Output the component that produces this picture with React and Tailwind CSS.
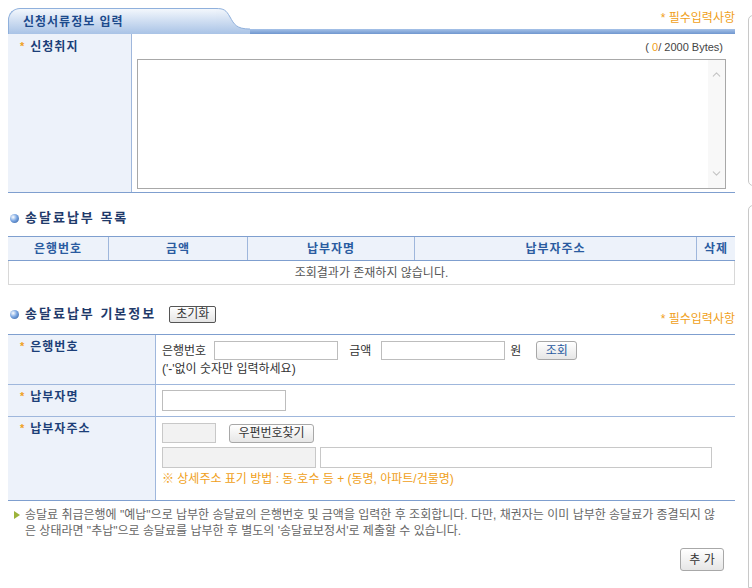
import React from 'react';
import { ChevronUp, ChevronDown } from 'lucide-react';

const Star = () => <span className="text-[#f0a020] text-[11px] mr-[5px]">*</span>;

const Bullet = () => (
  <span className="inline-block ml-[2px] w-[9px] h-[9px] rounded-full bg-[radial-gradient(circle_at_35%_35%,#ffffff,#7aa6e2_45%,#2b5797)] mr-[6px]"></span>
);

const GrayButton = ({ children, className = '' }) => (
  <button className={`border border-[#a8a8a8] rounded-[3px] bg-gradient-to-b from-white to-[#e6e6e6] text-[12px] leading-none ${className}`}>
    {children}
  </button>
);

const Label = ({ children }) => (
  <div className="w-[148px] shrink-0 bg-[#edf2fa] border-r border-[#9fb7dc] pl-[12px] pt-[3px] font-bold text-[12px] tracking-[1px] text-[#1c3f78] flex items-start">
    <Star />
    {children}
  </div>
);

const App = () => {
  const columns = [
    { label: '은행번호', w: 'w-[101px]' },
    { label: '금액', w: 'w-[139px]' },
    { label: '납부자명', w: 'w-[167px]' },
    { label: '납부자주소', w: 'w-[282px]' },
    { label: '삭제', w: 'flex-1' }
  ];

  return (
    <div className="w-[752px] h-[588px] overflow-hidden bg-white flex text-[12px] text-[#333] font-['Liberation_Sans','Noto_Sans_CJK_KR',sans-serif]">
      {/* Main column */}
      <div className="ml-2 w-[727px] shrink-0 flex flex-col">
        {/* Tab header */}
        <div className="relative h-[34px] flex items-end">
          <div className="w-[208px] h-[26px] rounded-tl-[12px] border-t border-l border-[#8fb0dc] bg-gradient-to-b from-[#f3f7fc] to-[#a9c3e6] pl-[14px] pt-[4px] font-bold text-[12px] tracking-[1px] text-[#1c4a8c]">
            신청서류정보 입력
          </div>
          <svg width="34" height="26" viewBox="0 0 34 26" className="shrink-0">
            <defs>
              <linearGradient id="tabg" x1="0" y1="0" x2="0" y2="1">
                <stop offset="0" stopColor="#f3f7fc" />
                <stop offset="1" stopColor="#a9c3e6" />
              </linearGradient>
            </defs>
            <path d="M0 0.5 C8 0.5 10 2 14 9 C18 16 20 21 34 21 L34 26 L0 26 Z" fill="url(#tabg)" />
            <path d="M0 0.5 C8 0.5 10 2 14 9 C18 16 20 21 34 21" fill="none" stroke="#8fb0dc" />
          </svg>
          <div className="flex-1 h-[5px] bg-gradient-to-b from-[#a6c2e8] to-[#7097cf]"></div>
          <div className="absolute right-0 top-[9px] text-[12px] text-[#f0a020]">* 필수입력사항</div>
        </div>

        {/* Form 1 */}
        <div className="h-[159px] flex border-b border-[#7f9fcf]">
          <div className="w-[124px] shrink-0 bg-[#edf2fa] border-r border-[#9fb7dc] pl-[12px] pt-[4px] font-bold text-[12px] tracking-[1px] text-[#1c3f78] flex items-start">
            <Star />
            신청취지
          </div>
          <div className="flex-1 flex flex-col pl-[5px] pr-[9px]">
            <div className="text-right text-[11px] pt-[5px] pr-[3px] h-[25px] text-[#444]">
              ( <span className="text-[#f0a020]">0</span>/ 2000 Bytes)
            </div>
            <div className="h-[130px] border border-[#a8a8a8] flex justify-end">
              <div className="w-[17px] bg-[#f8f8f8] flex flex-col justify-between items-center py-[8px]">
                <ChevronUp size={13} className="text-[#c4c4c4]" />
                <ChevronDown size={13} className="text-[#c4c4c4]" />
              </div>
            </div>
          </div>
        </div>

        {/* List heading */}
        <div className="mt-[17px] h-[16px] flex items-center font-bold text-[13px] tracking-[2px] text-[#1f3a6a]">
          <Bullet />
          송달료납부 목록
        </div>

        {/* List table */}
        <div className="mt-[10px]">
          <div className="h-[25px] flex border-t border-b border-[#7f9fcf] bg-[#edf2fa]">
            {columns.map((c, i) => (
              <div
                key={c.label}
                className={`${c.w} flex items-center justify-center font-bold text-[12px] tracking-[1px] text-[#2a5ba0] ${i < columns.length - 1 ? 'border-r border-[#9fb7dc]' : ''}`}
              >
                {c.label}
              </div>
            ))}
          </div>
          <div className="h-[24px] flex items-center justify-center border-l border-r border-b border-[#d8d8d8] text-[#555]">
            조회결과가 존재하지 않습니다.
          </div>
        </div>

        {/* Basic info heading */}
        <div className="mt-[20px] h-[18px] flex items-end justify-between">
          <div className="flex items-center h-[18px] font-bold text-[13px] tracking-[2px] text-[#1f3a6a]">
            <Bullet />
            송달료납부 기본정보
            <button className="ml-[13px] h-[17px] px-[6px] border border-[#555] rounded-[2px] bg-gradient-to-b from-white to-[#e4e4e4] font-normal text-[12px] tracking-normal text-[#333] leading-none">
              초기화
            </button>
          </div>
          <div className="text-[12px] text-[#f0a020] translate-y-[5px]">* 필수입력사항</div>
        </div>

        {/* Form 2 */}
        <div className="mt-[11px] border-t border-[#7f9fcf]">
          <div className="h-[50px] flex border-b border-[#9fb7dc]">
            <Label>은행번호</Label>
            <div className="flex-1 pl-[6px] pt-[6px]">
              <div className="flex items-center h-[19px]">
                <span>은행번호</span>
                <input className="ml-[8px] w-[124px] h-[19px] border border-[#bdbdbd] bg-white" />
                <span className="ml-[11px]">금액</span>
                <input className="ml-[10px] w-[124px] h-[19px] border border-[#bdbdbd] bg-white" />
                <span className="ml-[5px]">원</span>
                <GrayButton className="ml-[15px] w-[41px] h-[19px] text-[#2a5ba0]">조회</GrayButton>
              </div>
              <div className="mt-[1px] leading-[16px]">('-'없이 숫자만 입력하세요)</div>
            </div>
          </div>

          <div className="h-[32px] flex border-b border-[#9fb7dc]">
            <Label>납부자명</Label>
            <div className="flex-1 pl-[6px] pt-[5px]">
              <input className="w-[124px] h-[21px] border border-[#bdbdbd] bg-white" />
            </div>
          </div>

          <div className="h-[84px] flex border-b border-[#7f9fcf]">
            <Label>납부자주소</Label>
            <div className="flex-1 pl-[6px] pt-[6px]">
              <div className="flex items-center h-[20px]">
                <input disabled className="w-[54px] h-[20px] border border-[#c8c8c8] bg-[#f2f2f2]" />
                <GrayButton className="ml-[13px] w-[85px] h-[19px] text-[#333]">우편번호찾기</GrayButton>
              </div>
              <div className="flex mt-[4px]">
                <input disabled className="w-[154px] h-[21px] border border-[#c8c8c8] bg-[#f2f2f2]" />
                <input className="ml-[4px] w-[392px] h-[21px] border border-[#c8c8c8] bg-white" />
              </div>
              <div className="mt-[3px] text-[#f0a020] leading-[16px]">※ 상세주소 표기 방법 : 동·호수 등 + (동명, 아파트/건물명)</div>
            </div>
          </div>
        </div>

        {/* Note */}
        <div className="flex pt-[6px] pl-[5px] pr-[16px] text-[#666] leading-[16px]">
          <span className="w-[12px] shrink-0 pt-[4px]">
            <svg width="8" height="8" viewBox="0 0 8 8">
              <path d="M1 0 L7 4 L1 8 Z" fill="#9cb33a" />
            </svg>
          </span>
          <p className="flex-1">
            송달료 취급은행에 "예납"으로 납부한 송달료의 은행번호 및 금액을 입력한 후 조회합니다. 다만, 채권자는 이미 납부한 송달료가 종결되지 않은 상태라면 "추납"으로 송달료를 납부한 후 별도의 '송달료보정서'로 제출할 수 있습니다.
          </p>
        </div>

        <div className="flex justify-end mt-[9px] pr-[11px]">
          <GrayButton className="w-[44px] h-[23px] text-[#333]">추 가</GrayButton>
        </div>
      </div>

      {/* Side panels (cut off) */}
      <div className="ml-[13px] shrink-0 flex flex-col">
        <div className="mt-[15px] w-[20px] h-[178px] border border-[#c8c8c8] rounded-tl-[5px] rounded-bl-[5px]"></div>
        <div className="mt-[19px] w-[20px] h-[400px] border border-[#c8c8c8] rounded-tl-[5px]"></div>
      </div>
    </div>
  );
};

export default App;
